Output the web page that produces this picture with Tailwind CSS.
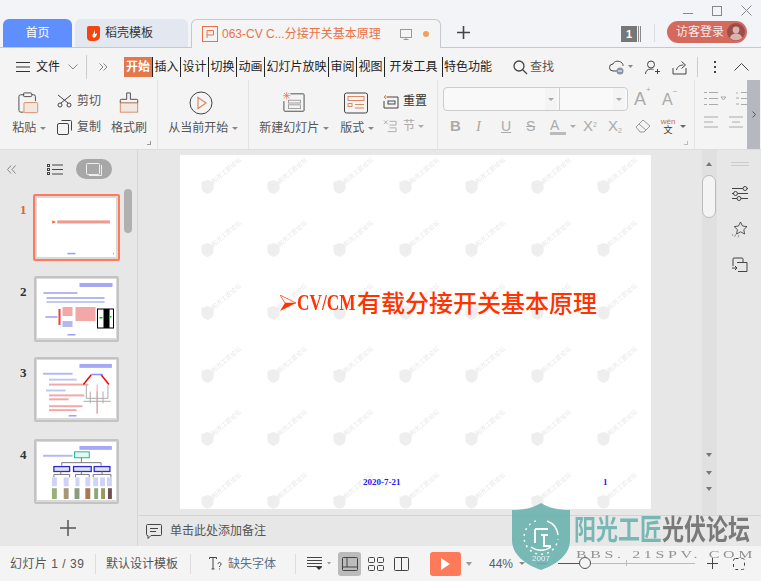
<!DOCTYPE html>
<html lang="zh-CN">
  <head>
    <meta charset="UTF-8" />
    <title>WPS 演示</title>
    <script src="https://cdn.jsdelivr.net/npm/@tailwindcss/browser@4"></script>
  </head>
  <body class="relative w-[761px] h-[581px] overflow-hidden bg-[#f4f4f4] text-[#444] text-[12px] font-['Liberation_Sans','Noto_Sans_CJK_SC',sans-serif]">
    <!-- tab bar -->
    <div class="relative flex items-end h-[48px] bg-[#f3f4f7] border-b border-[#c5c8d0] pl-[3px]">
      <div class="flex items-center justify-center w-[69px] h-[28px] rounded-t-[6px] bg-[#5f8fff] text-white">首页</div>
      <div class="flex items-center gap-[5px] w-[113px] h-[28px] ml-[3px] pl-[12px] rounded-t-[6px] bg-[#e3e7f0] text-[#333]">
        <svg width="13" height="15" viewBox="0 0 13 15"><path d="M2 0h9a2 2 0 0 1 2 2v8a5 5 0 0 1-5 5H4a4 4 0 0 1-4-4V2a2 2 0 0 1 2-2z" fill="#f4440f"/><path d="M7 3c1 2 0 4-1 5s-1 3 1 4c2-1 3-3 3-5-1 1-2 1-2 1 0-2 0-4-1-5z" fill="#fff"/></svg>
        <span>稻壳模板</span>
      </div>
      <div class="flex items-center w-[250px] h-[29px] ml-[3px] -mb-px pl-[10px] rounded-t-[6px] border border-b-0 border-[#c5c8d0] bg-[#f4f4f4] text-[#e8734a]">
        <svg width="16" height="16" viewBox="0 0 16 16" fill="none" stroke="#e8734a"><rect x=".5" y=".5" width="15" height="15"/><path d="M5 12V4.500h6.500V9H5"/></svg>
        <span class="ml-[4px] w-[161px] whitespace-nowrap">063-CV C...分接开关基本原理</span>
        <svg class="ml-[17px]" width="13" height="13" viewBox="0 0 13 13" fill="none" stroke="#999"><rect x=".5" y="1.500" width="11" height="8"/><path d="M6 9.500v2M3.500 11.500h5"/></svg>
        <span class="ml-[10px] w-[6px] h-[6px] rounded-full bg-[#eda35c]"></span>
      </div>
      <svg class="ml-[16px] mb-[8px]" width="13" height="13" viewBox="0 0 13 13" stroke="#444" stroke-width="1.600"><path d="M6.500 0v13M0 6.500h13"/></svg>
      <div class="flex items-center ml-[151px] mb-[5px] h-[16px]">
        <span class="flex items-center justify-center w-[16px] h-[16px] bg-[#777] text-white font-bold text-[11px]">1</span>
        <span class="w-[3px] h-[16px] ml-px border-x border-[#888]"></span>
      </div>
      <span class="w-px h-[18px] mb-[5px] ml-[13px] bg-[#ddd]"></span>
      <div class="flex items-center justify-between w-[80px] h-[22px] ml-[12px] mb-[4px] pl-[9px] pr-[2px] rounded-full bg-[#d4695e] text-white">
        <span class="text-[#fbe9e6]">访客登录</span>
        <svg width="18" height="18" viewBox="0 0 18 18"><circle cx="9" cy="9" r="9" fill="#9b4d4b"/><circle cx="9" cy="7" r="3.400" fill="#d9b3ae"/><path d="M2.800 15c1-3.500 3.500-4.500 6.200-4.500s5.200 1 6.200 4.500A9 9 0 0 1 2.800 15z" fill="#d9b3ae"/></svg>
      </div>
      <div class="absolute top-[5px] right-[9px] flex items-center gap-[19px]">
        <span class="w-[10px] h-px mt-[6px] bg-[#888]"></span>
        <span class="w-[10px] h-[10px] border border-[#888]"></span>
        <svg width="11" height="11" viewBox="0 0 11 11" stroke="#888"><path d="M.5.5l10 10M10.500.5l-10 10"/></svg>
      </div>
    </div>

    <!-- menu row -->
    <div class="flex items-center h-[32px] pt-[6px] pl-[16px] text-[#222] text-[12px]">
      <svg width="14" height="10" viewBox="0 0 14 10" stroke="#333"><path d="M0 .5h14M0 5h14M0 9.500h14"/></svg>
      <span class="ml-[6px]">文件</span>
      <svg class="ml-[8px]" width="10" height="6" viewBox="0 0 10 6" fill="none" stroke="#888"><path d="M.5.500L5 5 9.500.5"/></svg>
      <span class="w-px h-[24px] ml-[8px] bg-[#ccc]"></span>
      <svg class="ml-[12px]" width="9" height="8" viewBox="0 0 9 8" fill="none" stroke="#888"><path d="M.5.500L4 4 .5 7.500M4.500.5L8 4 4.500 7.500"/></svg>
      <span class="flex items-center justify-center w-[28px] h-[20px] ml-[16px] bg-[#e5784a] text-white font-bold">开始</span>
      <span class="flex items-center justify-center w-[28px] h-[20px] border-l border-[#222]">插入</span>
      <span class="flex items-center justify-center w-[28px] h-[20px] border-l border-[#222]">设计</span>
      <span class="flex items-center justify-center w-[28px] h-[20px] border-l border-[#222]">切换</span>
      <span class="flex items-center justify-center w-[28px] h-[20px] border-l border-[#222]">动画</span>
      <span class="flex items-center justify-center w-[64px] h-[20px] border-l border-[#222]">幻灯片放映</span>
      <span class="flex items-center justify-center w-[28px] h-[20px] border-l border-[#222]">审阅</span>
      <span class="flex items-center justify-center w-[28px] h-[20px] border-l border-[#222]">视图</span>
      <span class="flex items-center justify-center w-[58px] h-[20px] border-l border-[#222]">开发工具</span>
      <span class="flex items-center justify-center w-[51px] h-[20px] border-l border-[#222]">特色功能</span>
      <svg class="ml-[20px]" width="15" height="15" viewBox="0 0 15 15" fill="none" stroke="#444" stroke-width="1.300"><circle cx="6" cy="6" r="5"/><path d="M9.500 9.500L14 14"/></svg>
      <span class="ml-[2px] text-[#555]">查找</span>
      <svg class="ml-[54px]" width="26" height="15" viewBox="0 0 26 15" fill="none" stroke="#444"><path d="M12 11H5a3.500 3.500 0 0 1 0-7c1-3 6-4 9-1 1 1 1 2 1 3"/><circle cx="12" cy="11" r="3.500" fill="#8a94a8" stroke="none"/><path d="M10 11h4" stroke="#fff"/><path d="M20 5h5l-2.500 3z" fill="#888" stroke="none"/></svg>
      <svg class="ml-[11px]" width="15" height="15" viewBox="0 0 15 15" fill="none" stroke="#444"><circle cx="6" cy="4.500" r="3.500"/><path d="M.5 14c0-3 2-5 5.500-5 1 0 2 .2 2.500.6M10 11.500h5M12.500 9v5"/></svg>
      <svg class="ml-[12px]" width="16" height="15" viewBox="0 0 16 15" fill="none" stroke="#444"><path d="M1 8v6h13V8"/><path d="M4.500 10c1-4 4-5 7-5M9.500 1.500l4 3.500-4 3.500"/></svg>
      <span class="w-px h-[20px] ml-[9px] bg-[#ccc]"></span>
      <span class="flex flex-col gap-[3px] ml-[16px]"><i class="block w-[2px] h-[2px] bg-[#444]"></i><i class="block w-[2px] h-[2px] bg-[#444]"></i><i class="block w-[2px] h-[2px] bg-[#444]"></i></span>
      <svg class="ml-[18px]" width="15" height="8" viewBox="0 0 15 8" fill="none" stroke="#444"><path d="M.5 7.500L7.500.5l7 7"/></svg>
    </div>

    <!-- ribbon -->
    <div class="flex h-[70px] border-b border-[#ddd] text-[#555]">
      <div class="relative flex w-[158px] border-r border-[#e2e2e2] pt-[12px]">
        <div class="flex flex-col items-center w-[38px] ml-[10px]">
          <svg width="22" height="22" viewBox="0 0 24 24" fill="none" stroke="#444"><path d="M7 3H3a2 2 0 0 0-2 2v15a2 2 0 0 0 2 2h3"/><path d="M15 3h2a2 2 0 0 1 2 2v5"/><rect x="6" y="1" width="9" height="4" rx="1"/><rect x="6.500" y="11.500" width="15" height="11" rx="1" fill="#f1e7e1" stroke="#d98a62"/></svg>
          <span class="mt-[5px] whitespace-nowrap">粘贴 <i class="inline-block border-x-[3px] border-t-[3px] border-x-transparent border-t-[#888] align-middle"></i></span>
        </div>
        <div class="flex flex-col gap-[8px] ml-[9px]">
          <div class="flex items-center gap-[5px]">
            <svg width="15" height="14" viewBox="0 0 15 14" fill="none" stroke="#444"><path d="M1 1l10 8M14 1L4 9"/><circle cx="3" cy="11" r="2"/><circle cx="12" cy="11" r="2"/></svg>
            <span>剪切</span>
          </div>
          <div class="flex items-center gap-[5px]">
            <svg width="15" height="15" viewBox="0 0 15 15" fill="none" stroke="#444"><path d="M4.500.5h9a1 1 0 0 1 1 1v9"/><rect x=".5" y="3.500" width="11" height="11" rx="1.500"/></svg>
            <span>复制</span>
          </div>
        </div>
        <div class="flex flex-col items-center w-[38px] ml-[9px]">
          <svg width="20" height="22" viewBox="0 0 21 24" fill="none" stroke="#444"><path d="M8 1h4v7h7a1 1 0 0 1 1 1v3H1V9a1 1 0 0 1 1-1h6z"/><rect x="1" y="12" width="19" height="10" fill="#f1e7e1" stroke="#d98a62"/></svg>
          <span class="mt-[5px] whitespace-nowrap">格式刷</span>
        </div>
        <span class="absolute right-[6px] bottom-[4px] w-[4px] h-[4px] border-r border-b border-[#999]"></span>
      </div>
      <div class="flex flex-col items-center w-[91px] border-r border-[#e2e2e2] pt-[11px]">
        <svg class="mr-[4px]" width="24" height="24" viewBox="0 0 24 24" fill="none"><circle cx="12" cy="12" r="11" stroke="#444"/><path d="M9 6.500l8 5.500-8 5.500z" stroke="#d98a62" stroke-width="1.200"/></svg>
        <span class="mt-[4px] whitespace-nowrap">从当前开始 <i class="inline-block border-x-[3px] border-t-[3px] border-x-transparent border-t-[#888] align-middle"></i></span>
      </div>
      <div class="flex w-[189px] border-r border-[#e2e2e2] pt-[12px]">
        <div class="flex flex-col items-center w-[72px] ml-[9px]">
          <svg width="24" height="22" viewBox="0 0 24 24" fill="none" stroke="#444"><path d="M8 2h14a1 1 0 0 1 1 1v17a1 1 0 0 1-1 1H2a1 1 0 0 1-1-1V10"/><rect x="6" y="9" width="13" height="3" stroke="#999"/><rect x="6" y="14" width="13" height="4" stroke="#999"/><path d="M1 1l6 6M7 1L1 7M4 0v8M0 4h8" stroke="#e8734a" stroke-width=".8"/></svg>
          <span class="mt-[5px] whitespace-nowrap">新建幻灯片 <i class="inline-block border-x-[3px] border-t-[3px] border-x-transparent border-t-[#888] align-middle"></i></span>
        </div>
        <div class="flex flex-col items-center w-[38px] ml-[8px]">
          <svg class="mr-[3px]" width="24" height="22" viewBox="0 0 24 21" fill="none" stroke="#444"><rect x=".5" y=".5" width="23" height="20" rx="2"/><rect x="4" y="4" width="16" height="4" stroke="#d98a62"/><rect x="4" y="11" width="4" height="3" stroke="#d98a62"/><path d="M11 12h9M11 15.500h9" stroke="#d98a62"/></svg>
          <span class="mt-[5px] whitespace-nowrap">版式 <i class="inline-block border-x-[3px] border-t-[3px] border-x-transparent border-t-[#888] align-middle"></i></span>
        </div>
        <div class="flex flex-col gap-[7px] ml-[7px]">
          <div class="flex items-center gap-[4px] text-[#333]">
            <svg width="16" height="15" viewBox="0 0 16 15" fill="none" stroke="#444"><path d="M4 3h11v11H1V7"/><rect x="5" y="7" width="7" height="3"/><path d="M6 3H1M3 1L1 3l2 2" stroke="#d98a62"/></svg>
            <span>重置</span>
          </div>
          <div class="flex items-center gap-[6px] text-[#aaa]">
            <svg width="14" height="14" viewBox="0 0 15 14" fill="none" stroke="#aaa"><path d="M7 2h7v4H7M7 9h7v4H5M1 1l4 4M5 1L1 5"/></svg>
            <span>节 <i class="inline-block border-x-[3px] border-t-[3px] border-x-transparent border-t-[#aaa] align-middle"></i></span>
          </div>
        </div>
      </div>
      <div class="relative w-[257px] border-r border-[#e2e2e2] pl-[5px] pt-[7px]">
        <div class="flex items-center gap-[6px]">
          <div class="flex w-[185px] h-[24px] rounded-[4px] border border-[#ccc] bg-[#f9f9f9]">
            <div class="flex items-center justify-end w-[116px] pr-[2px] border-r border-[#ccc]"><span class="flex items-center justify-center w-[12px] h-full bg-[#f4f4f4]"><i class="border-x-[3px] border-t-[3px] border-x-transparent border-t-[#aaa]"></i></span></div>
            <div class="flex items-center justify-end flex-1 pr-[2px]"><span class="flex items-center justify-center w-[12px] h-full bg-[#f4f4f4]"><i class="border-x-[3px] border-t-[3px] border-x-transparent border-t-[#aaa]"></i></span></div>
          </div>
          <span class="flex text-[18px] leading-none text-[#aaa] w-[22px]">A<sup class="text-[8px] leading-[8px]">+</sup></span>
          <span class="flex text-[16px] leading-none text-[#aaa] w-[20px] mt-[1px]">A<sup class="text-[8px] leading-[8px]">−</sup></span>
        </div>
        <div class="flex items-center mt-[6px] pl-[7px] h-[18px] text-[#aaa]">
          <span class="w-[26px] text-[15px] font-bold">B</span>
          <span class="w-[25px] text-[15px] italic font-['Liberation_Serif',serif]">I</span>
          <span class="w-[25px] text-[14px] underline">U</span>
          <span class="w-[24px] text-[14px] line-through">S</span>
          <span class="w-[16px] text-[14px] leading-[14px] border-b-[3px] border-[#bbb]">A</span>
          <i class="ml-[4px] w-0 border-x-[3px] border-t-[3px] border-x-transparent border-t-[#aaa]"></i>
          <span class="ml-[7px] w-[25px] text-[15px]">X<sup class="text-[7px]">2</sup></span>
          <span class="w-[27px] text-[15px]">X<sub class="text-[7px]">2</sub></span>
          <svg width="16" height="14" viewBox="0 0 16 14" fill="none" stroke="#999"><path d="M1 8l7-7 7 6-6 6H5zM4 5l7 6"/></svg>
          <span class="flex flex-col items-center ml-[9px] w-[16px] leading-[9px]"><b class="text-[8px] font-normal text-[#c2703f]">wén</b><b class="text-[9px] font-normal text-[#333]">文</b></span>
          <i class="ml-[4px] w-0 border-x-[3px] border-t-[3px] border-x-transparent border-t-[#666]"></i>
        </div>
        <span class="absolute right-[6px] bottom-[4px] w-[4px] h-[4px] border-r border-b border-[#bbb]"></span>
      </div>
      <div class="flex flex-col gap-[10px] w-[52px] pl-[9px] pt-[11px] overflow-hidden">
        <div class="flex items-center gap-[10px]">
          <svg class="shrink-0" width="22" height="15" viewBox="0 0 22 15" fill="none" stroke="#aaa"><path d="M5 1.500h9M5 7.500h9M5 13.500h9M0 1.500h3M0 7.500h3M0 13.500h3M17 6h5l-2.500 3z"/></svg>
          <svg class="shrink-0" width="12" height="15" viewBox="0 0 12 15" fill="none" stroke="#aaa"><path d="M5 1.500h7M5 7.500h7M5 13.500h7M1 1v2M0 7h3M0 13h3"/></svg>
        </div>
        <div class="flex items-center gap-[11px]">
          <svg class="shrink-0" width="14" height="13" viewBox="0 0 14 13" stroke="#aaa"><path d="M0 1h14M0 6h9M0 11h14"/></svg>
          <svg class="shrink-0" width="14" height="13" viewBox="0 0 14 13" stroke="#aaa"><path d="M0 1h14M3 6h8M0 11h14"/></svg>
        </div>
      </div>
      <div class="flex items-center justify-center w-[13px] bg-[#b5b8bf]">
        <svg width="4" height="7" viewBox="0 0 4 7" fill="none" stroke="#555"><path d="M.5.500l3 3-3 3"/></svg>
      </div>
    </div>

    <!-- main area -->
    <div class="flex h-[396px] bg-[#e7e7e7]">
      <div class="relative w-[138px] border-r border-[#d6d6d6]">
        <div class="flex items-center h-[38px]">
          <svg class="ml-[7px]" width="9" height="9" viewBox="0 0 9 9" fill="none" stroke="#888"><path d="M4 .5L.5 4.500 4 8.500M8.500.5L5 4.500l3.500 4"/></svg>
          <svg class="ml-[31px]" width="16" height="11" viewBox="0 0 16 11" fill="none" stroke="#444"><path d="M5 1h11M5 5.500h11M5 10h11"/><rect x=".5" y=".5" width="2" height="2"/><rect x=".5" y="4.500" width="2" height="2"/><rect x=".5" y="8.500" width="2" height="2"/></svg>
          <span class="flex items-center justify-center w-[36px] h-[20px] ml-[13px] rounded-full bg-[#a7a7a7]">
            <svg width="16" height="13" viewBox="0 0 16 13" fill="none" stroke="#eee"><rect x=".5" y=".5" width="13" height="11" rx="1"/><path d="M15.500 2v10.500H3"/></svg>
          </span>
        </div>
        <div class="absolute top-[39px] left-[124px] w-[8px] h-[44px] rounded-full bg-[#b0b0b0]"></div>
        <div class="flex flex-col gap-[15px] pl-[20px] pt-[6px] font-['Liberation_Serif',serif] font-bold text-[13px] text-[#333]">
          <div class="flex">
            <span class="w-[13px] pt-[6px] text-[#e0661f]">1</span>
            <div class="w-[87px] h-[67px] border-[2px] border-[#ff7a59] rounded-[2px] bg-[#d9d9d9] p-[2px]">
              <svg class="block bg-white blur-[0.4px]" width="79" height="59" viewBox="0 0 78 58">
                <path d="M15 22l4 1.500-4 1.500z" fill="#ff5a1f"/><rect x="20" y="22" width="52" height="3" fill="#ef9a8d"/><rect x="30" y="54" width="8" height="1.500" fill="#9aa0f0"/><rect x="75" y="54" width="1" height="1.500" fill="#9aa0f0"/>
              </svg>
            </div>
          </div>
          <div class="flex">
            <span class="w-[14px] pt-[6px]">2</span>
            <div class="w-[85px] h-[66px] border-[2px] border-[#c3c3c3] rounded-[2px] p-[1px] bg-[#d9d9d9]">
              <svg class="block bg-white blur-[0.4px]" width="79" height="59" viewBox="0 0 78 59">
                <rect x="42" y="4" width="33" height="4" fill="#a5a8f2"/><rect x="6" y="13" width="34" height="2" fill="#b4b8ee"/><rect x="9" y="18" width="58" height="2" fill="#b4b8ee"/><rect x="9" y="22" width="58" height="2" fill="#c4c7f2"/><rect x="21" y="30" width="2" height="16" fill="#f03d3d"/><rect x="8" y="37" width="12" height="2" fill="#b4b8ee"/><rect x="25" y="28" width="10" height="9" fill="#f3a8a8"/><rect x="38" y="28" width="20" height="14" fill="#f3a8a8"/><rect x="25" y="42" width="10" height="6" fill="#b4b8ee"/><rect x="60" y="30" width="16" height="19" fill="none" stroke="#000"/><rect x="66" y="30" width="6" height="19" fill="#000"/><rect x="62" y="38" width="3" height="1.500" fill="#0c0"/><rect x="72" y="37" width="2" height="1.500" fill="#0c0"/><rect x="30" y="55" width="8" height="1.500" fill="#9aa0f0"/>
              </svg>
            </div>
          </div>
          <div class="flex">
            <span class="w-[14px] pt-[6px]">3</span>
            <div class="w-[85px] h-[65px] border-[2px] border-[#c3c3c3] rounded-[2px] p-[1px] bg-[#d9d9d9]">
              <svg class="block bg-white blur-[0.4px]" width="79" height="58" viewBox="0 0 78 59">
                <rect x="42" y="4" width="33" height="4" fill="#a5a8f2"/><rect x="5" y="13" width="30" height="2" fill="#b4b8ee"/><rect x="11" y="19" width="28" height="2" fill="#c4c7f2"/><rect x="11" y="24" width="40" height="2" fill="#f3a8a8"/><rect x="8" y="30" width="20" height="2" fill="#c4c7f2"/><rect x="11" y="35" width="36" height="2" fill="#f3a8a8"/><rect x="11" y="39" width="20" height="2" fill="#f3a8a8"/><rect x="11" y="46" width="34" height="2" fill="#f3a8a8"/><rect x="11" y="50" width="28" height="2" fill="#f3a8a8"/>
                <path d="M46 25l8-10M72 25L64 15" stroke="#f00" stroke-width="1.500"/><path d="M49 25v14h22V25M46 42h28M53 32v12M60 32v16M66 32v12M60 48v6" stroke="#aaa" fill="none"/><path d="M60 25v30" stroke="#f39a9a"/><rect x="54" y="14" width="12" height="1.500" fill="#8a8ff0"/><rect x="31" y="56" width="8" height="1.500" fill="#9aa0f0"/>
              </svg>
            </div>
          </div>
          <div class="flex mt-[2px]">
            <span class="w-[14px] pt-[6px]">4</span>
            <div class="w-[85px] h-[65px] border-[2px] border-[#c3c3c3] rounded-[2px] p-[1px] bg-[#d9d9d9]">
              <svg class="block bg-white blur-[0.4px]" width="79" height="58" viewBox="0 0 78 59">
                <rect x="42" y="4" width="33" height="4" fill="#a5a8f2"/><rect x="5" y="13" width="30" height="2" fill="#b4b8ee"/><rect x="37" y="10" width="15" height="6" fill="#e8f5f0" stroke="#10c090"/><path d="M24 24v-3h40v3M44 16v5" fill="none" stroke="#777"/><rect x="16" y="25" width="16" height="5" fill="#dfe0f5" stroke="#2a2ac8" stroke-width="1.300"/><rect x="36" y="25" width="18" height="5" fill="#dfe0f5" stroke="#2a2ac8" stroke-width="1.300"/><rect x="57" y="25" width="16" height="5" fill="#dfe0f5" stroke="#2a2ac8" stroke-width="1.300"/><path d="M23 30v3M44 30v3M65 30v3M16 36v-3h16v3M38 36v-3h14v3M56 36v-3h18v3" fill="none" stroke="#777"/><g fill="#d0d2f7"><rect x="14" y="36" width="5" height="9"/><rect x="26" y="36" width="5" height="9"/><rect x="38" y="36" width="4" height="9"/><rect x="48" y="36" width="5" height="9"/><rect x="56" y="36" width="5" height="9"/><rect x="63" y="36" width="5" height="9"/><rect x="70" y="36" width="5" height="9"/></g><rect x="14" y="47" width="5" height="11" fill="#9ab07a"/><rect x="26" y="47" width="5" height="11" fill="#a39878"/><rect x="37" y="47" width="5" height="11" fill="#8e9a80"/><rect x="48" y="47" width="5" height="11" fill="#a8784f"/><rect x="57" y="47" width="4" height="11" fill="#8fa67a"/><rect x="64" y="47" width="4" height="11" fill="#9a9a60"/><rect x="71" y="47" width="4" height="11" fill="#705050"/>
              </svg>
            </div>
          </div>
        </div>
        <svg class="absolute left-[60px] top-[370px]" width="16" height="16" viewBox="0 0 16 16" stroke="#555" stroke-width="1.500"><path d="M8 0v16M0 8h16"/></svg>
      </div>
      <div class="flex flex-col w-[623px]">
        <div class="flex h-[365px]">
          <div class="w-[564px] pl-[42px] pt-[5px]">
            <div class="relative w-[471px] h-[354px] bg-white overflow-hidden">
              <div id="marks" class="absolute inset-0 grid grid-cols-[repeat(7,66px)] auto-rows-[63px] pl-[21px] pt-[3px]"></div>
              <div class="relative flex items-center pl-[100px] pt-[132px] text-[#ff3300] text-[24px] leading-[30px] font-medium font-['Noto_Sans_CJK_SC',serif]">
                <svg class="mr-[1px] mt-[2px]" width="16" height="16" viewBox="0 0 16 16"><path d="M0 0l16 8L0 16l5-8z" fill="#ff3300"/><path d="M0 0l16 8H5z" fill="#fff" stroke="#ff3300" stroke-width=".6"/></svg>
                <span class="inline-block w-[60px] origin-left scale-x-[.72] whitespace-nowrap font-bold font-['Liberation_Serif',serif]">CV/CM</span>
                <span class="whitespace-nowrap">有载分接开关基本原理</span>
              </div>
              <div class="relative flex mt-[160px] pl-[183px] text-[9px] leading-[10px] font-bold text-[#2222ee] font-['Liberation_Serif',serif]">
                <span class="w-[240px]">2020-7-21</span><span>1</span>
              </div>
            </div>
          </div>
          <div class="relative w-[15px] bg-[#e0e0e0]">
            <i class="absolute left-[4px] top-[12px] border-x-[3px] border-b-[4px] border-x-transparent border-b-[#777]"></i>
            <div class="absolute left-0 top-[25px] w-[14px] h-[43px] rounded-full border border-[#bbb] bg-[#f4f4f4]"></div>
            <i class="absolute left-[4px] top-[303px] border-x-[3px] border-t-[4px] border-x-transparent border-t-[#777]"></i>
            <i class="absolute left-[4px] top-[321px] border-x-[3px] border-t-[4px] border-x-transparent border-t-[#777]"></i>
            <i class="absolute left-[4px] top-[337px] border-x-[3px] border-t-[4px] border-x-transparent border-t-[#777]"></i>
          </div>
          <div class="flex flex-col items-center w-[44px] pt-[12px] pl-[2px]">
            <div class="w-[18px] h-[4px] border-y border-[#ccc]"></div>
            <svg class="mt-[20px]" width="16" height="15" viewBox="0 0 16 15" fill="none" stroke="#444"><path d="M0 2.500h11M15 2.500h1M0 7.500h2M6 7.500h10M0 12.500h5M9 12.500h7"/><circle cx="13" cy="2.500" r="2"/><circle cx="3.500" cy="7.500" r="2"/><circle cx="7" cy="12.500" r="2"/></svg>
            <svg class="mt-[20px]" width="16" height="17" viewBox="0 0 16 17" fill="none" stroke="#444"><path d="M8.500 1l2 4 4.500.6-3.200 3 .8 4.400-4-2.200-4 2.200.8-4.400-3.200-3L6.500 5z" stroke-width=".9"/><path d="M1 13l-1 2M4 13l-1.500 3M7 14l-1 2.500" stroke="#999"/></svg>
            <svg class="mt-[19px]" width="16" height="16" viewBox="0 0 16 16" fill="none" stroke="#444"><path d="M1 9V2a1 1 0 0 1 1-1h8a1 1 0 0 1 1 1v3"/><path d="M5 5.500h10v9H6"/><path d="M0 11h5M3 9l2 2-2 2"/></svg>
          </div>
        </div>
        <!-- notes row -->
        <div class="flex items-center h-[31px] pl-[8px] border-t border-[#d4d4d4] text-[#555]">
          <svg width="16" height="15" viewBox="0 0 16 15" fill="none" stroke="#444"><path d="M1.500.5h13a1 1 0 0 1 1 1v9a1 1 0 0 1-1 1H5l-3 3v-3h-.5a1 1 0 0 1-1-1v-9a1 1 0 0 1 1-1z"/><path d="M4 4.500h8M4 7.500h6"/></svg>
          <span class="ml-[8px]">单击此处添加备注</span>
        </div>
      </div>
    </div>

    <!-- status bar -->
    <div class="flex items-center h-[35px] pl-[10px] bg-[#f4f4f4] text-[#555]">
      <span class="w-[85px] whitespace-nowrap tracking-[0.5px]">幻灯片 1 / 39</span>
      <span class="w-px h-[20px] bg-[#ddd]"></span>
      <span class="ml-[10px] w-[84px]">默认设计模板</span>
      <span class="w-px h-[20px] bg-[#ddd]"></span>
      <svg class="ml-[18px]" width="13" height="13" viewBox="0 0 13 13" fill="none" stroke="#444"><path d="M.5 2V.5h7V2M4 .5V12M2.500 12h3M9 7c0-2 3-2 3 0s-1.500 1-1.500 3M10.500 11.500v1"/></svg>
      <span class="ml-[6px] w-[67px] text-[#5a6f88]">缺失字体</span>
      <span class="w-px h-[20px] bg-[#ddd]"></span>
      <svg class="ml-[11px]" width="24" height="13" viewBox="0 0 24 13" stroke="#444" fill="none"><path d="M0 .5h15M0 3.500h15M0 6.500h15M0 9.500h15"/><path d="M9 10h6l-3 3z" fill="#333" stroke="none"/><path d="M20 5h4l-2 2.500z" fill="#999" stroke="none"/></svg>
      <span class="flex items-center justify-center w-[23px] h-[24px] ml-[7px] rounded-[3px] bg-[#bbb]">
        <svg width="16" height="14" viewBox="0 0 16 14" fill="none" stroke="#444"><rect x=".5" y=".5" width="15" height="13" rx="1"/><path d="M5 .5v9.500M.5 10h15"/></svg>
      </span>
      <svg class="ml-[7px]" width="16" height="14" viewBox="0 0 16 14" fill="none" stroke="#444"><rect x=".5" y=".5" width="6" height="5" rx="1"/><rect x="9.500" y=".5" width="6" height="5" rx="1"/><rect x=".5" y="8.500" width="6" height="5" rx="1"/><rect x="9.500" y="8.500" width="6" height="5" rx="1"/></svg>
      <svg class="ml-[10px]" width="15" height="14" viewBox="0 0 15 14" fill="none" stroke="#444"><rect x=".5" y=".5" width="14" height="13" rx="1"/><path d="M7.500.5v13"/></svg>
      <span class="flex items-center justify-center w-[31px] h-[24px] ml-[21px] rounded-[3px] bg-[#ff7a59]">
        <svg width="9" height="12" viewBox="0 0 9 12"><path d="M0 0l9 6-9 6z" fill="#fff"/></svg>
      </span>
      <i class="ml-[5px] border-x-[3px] border-t-[4px] border-x-transparent border-t-[#999]"></i>
      <span class="ml-[17px] w-[30px] text-[#4f6072]">44%</span>
      <i class="border-x-[3px] border-t-[3px] border-x-transparent border-t-[#888]"></i>
      <span class="w-[10px] h-px ml-[12px] bg-[#444]"></span>
      <div class="relative w-[137px] h-px ml-[11px] bg-[#bbb]">
        <span class="absolute left-0 top-0 w-[25px] h-px bg-[#555]"></span>
        <span class="absolute left-[21px] -top-[6px] w-[12px] h-[12px] rounded-full border border-[#555] bg-[#f4f4f4]"></span>
        <span class="absolute left-[68px] -top-[3px] w-px h-[6px] bg-[#bbb]"></span>
      </div>
      <svg class="ml-[12px]" width="11" height="11" viewBox="0 0 11 11" stroke="#444"><path d="M5.500 0v11M0 5.500h11"/></svg>
      <svg class="ml-[15px]" width="12" height="12" viewBox="0 0 12 12" fill="none" stroke="#444" stroke-dasharray="3 3"><rect x=".5" y=".5" width="11" height="11" rx="2"/></svg>
    </div>

    <!-- forum stamp over the window -->
    <div class="absolute left-[511px] top-[503px] flex items-start opacity-90 pointer-events-none">
      <svg width="60" height="67" viewBox="0 0 60 67">
        <path d="M30 0c8 5 18 7 29 7v30c0 14-12 24-29 30C13 61 1 51 1 37V7c11 0 21-2 29-7z" fill="#6bb3b0"/>
        <path d="M25 18a17 17 0 1 0 22 18" fill="none" stroke="#fff" stroke-width="1.500" stroke-dasharray="2 4"/>
        <path d="M36 18a17 17 0 0 1 11 14M20 44a17 17 0 0 0 20 0" fill="none" stroke="#fff" stroke-width="1.500"/>
        <path d="M24 26h13M24 26v14M30 32h7M33 32v11h7" fill="none" stroke="#fff" stroke-width="2"/>
        <text x="30" y="58" text-anchor="middle" font-size="8" fill="#e4f3f2" font-family="Liberation Sans">2007</text>
      </svg>
      <div class="flex flex-col ml-[3px] mt-[8px]">
        <div class="flex text-[22px] leading-[30px] font-bold origin-top scale-y-[1.3] whitespace-nowrap">
          <span class="text-[#6bb3b0]">阳光工匠</span><span class="text-[#6f6f6f]">光伏论坛</span>
        </div>
        <div class="w-fit mt-[8px] ml-[2px] origin-left scale-x-[1.45] text-[11px] leading-[10px] tracking-[2.500px] whitespace-nowrap text-[#888] font-['Liberation_Serif',serif]">BBS. 21SPV. COM</div>
      </div>
    </div>

    <script>
      // faint watermark tiles on the slide
      const marks = document.getElementById("marks");
      for (let i = 0; i < 42; i++) {
        marks.innerHTML += `<div class="flex items-end h-[36px] opacity-30">
          <svg class="shrink-0" width="13" height="14" viewBox="0 0 13 14"><path d="M6.500 0l6 2v6c0 3-3 5-6 6-3-1-6-3-6-6V2z" fill="#c9c9c9"/></svg>
          <span class="text-[6px] leading-[7px] mb-[8px] -ml-[1px] whitespace-nowrap text-[#aaa] -rotate-40 origin-left">阳光工匠论坛</span>
        </div>`;
      }
    </script>
  </body>
</html>
